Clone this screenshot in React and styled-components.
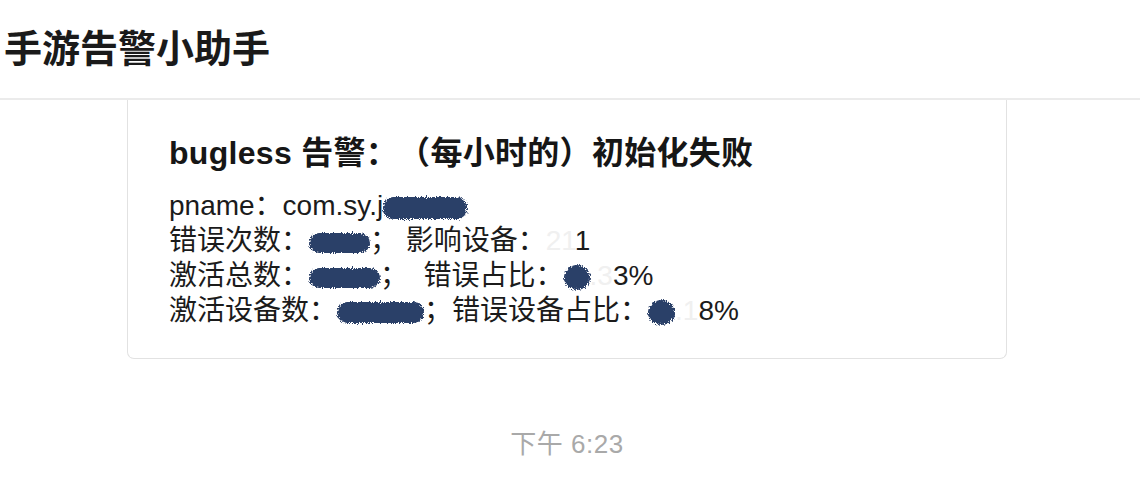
import styled, { createGlobalStyle } from "styled-components";

const GlobalStyle = createGlobalStyle`
  html, body {
    margin: 0;
    padding: 0;
    background: #ffffff;
  }
  body {
    font-family: "Liberation Sans", "Noto Sans CJK SC", sans-serif;
    color: #1b1b1b;
    text-spacing-trim: space-all;
  }
`;

const SPage = styled.div`
  width: 1140px;
  height: 484px;
  overflow: hidden;
  background: #ffffff;
`;

const SHeader = styled.header`
  height: 98px;
  display: flex;
  align-items: center;
  padding-left: 4px;
  border-bottom: 2px solid #ebebeb;
`;

const STitle = styled.h1`
  margin: 0;
  font-size: 38px;
  font-weight: 600;
  color: #1a1a1a;
  line-height: 1;
`;

const SFeed = styled.main`
  width: 880px;
  margin-left: 127px;
  display: flex;
  flex-direction: column;
  align-items: stretch;
`;

const SCard = styled.section`
  border: 1px solid #e2e2e2;
  border-top: none;
  border-radius: 0 0 7px 7px;
  padding: 33px 40px 30px 41px;
`;

const SCardTitle = styled.h2`
  margin: 0 0 15px;
  font-size: 32px;
  line-height: 40px;
  font-weight: 700;
  color: #161616;
  white-space: nowrap;
  letter-spacing: 0.3px;
`;

const SLine = styled.div`
  font-size: 28px;
  line-height: 35px;
  white-space: pre;
  color: #1b1b1b;
`;

const SMask = styled.span`
  display: inline-block;
  width: ${(p) => p.$w}px;
  height: ${(p) => p.$h || 21}px;
  background: #2a3f68;
  border-radius: ${(p) => (p.$round ? "50%" : "10px")};
  vertical-align: middle;
  filter: url(#ink);
`;

const SFaded = styled.span`
  color: #f0f0f0;
`;

const STime = styled.div`
  margin-top: 70px;
  text-align: center;
  font-size: 26px;
  line-height: 30px;
  color: #a9a9a9;
  letter-spacing: 0.5px;
`;

const InkFilter = () => (
  <svg width="0" height="0" style={{ position: "absolute" }} aria-hidden="true">
    <filter id="ink" x="-20%" y="-30%" width="140%" height="160%">
      <feTurbulence type="fractalNoise" baseFrequency="0.9" numOctaves="2" seed="3" result="noise" />
      <feDisplacementMap in="SourceGraphic" in2="noise" scale="6" xChannelSelector="R" yChannelSelector="G" />
    </filter>
  </svg>
);

export default function App() {
  return (
    <SPage>
      <GlobalStyle />
      <InkFilter />
      <SHeader>
        <STitle>手游告警小助手</STitle>
      </SHeader>
      <SFeed>
        <SCard>
          <SCardTitle>bugless 告警：（每小时的）初始化失败</SCardTitle>
          <SLine>
            pname：com.sy.j
            <SMask $w={84} $h={22} />
          </SLine>
          <SLine>
            错误次数：
            <SMask $w={61} $h={20} />； 影响设备：<SFaded>21</SFaded>1
          </SLine>
          <SLine>
            激活总数：
            <SMask $w={71} $h={20} />；  错误占比：
            <SMask $w={26} $h={25} $round />
            <SFaded>.3</SFaded>3%
          </SLine>
          <SLine>
            激活设备数：
            <SMask $w={87} $h={21} />；错误设备占比：
            <SMask $w={27} $h={25} $round />
            <SFaded>.1</SFaded>8%
          </SLine>
        </SCard>
        <STime>下午 6:23</STime>
      </SFeed>
    </SPage>
  );
}
